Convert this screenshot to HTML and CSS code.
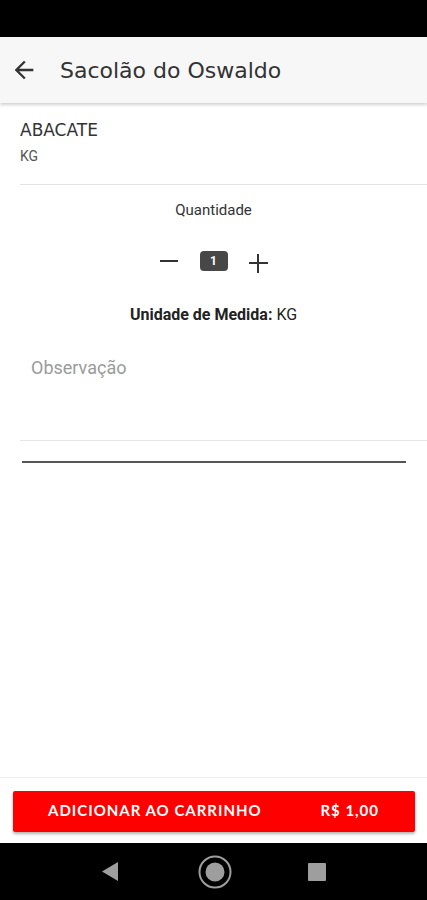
FILE: index.html
```html
<!DOCTYPE html>
<html>
<head>
  <title>Sacolão do Oswaldo</title>
  <link rel="stylesheet" href="styles.css">
</head>
<body>
  <div class="statusbar"></div>
  <header class="appbar">
    <svg class="back" width="28" height="28" viewBox="0 0 24 24">
      <path d="M20 11H7.83l5.59-5.59L12 4l-8 8 8 8 1.41-1.41L7.83 13H20v-2z" fill="#333"/>
    </svg>
    <span class="title">Sacolão do Oswaldo</span>
  </header>

  <main class="content">
    <div class="product">
      <div class="product-name">ABACATE</div>
      <div class="product-unit">KG</div>
    </div>

    <div class="qty-label">Quantidade</div>
    <div class="stepper">
      <span class="minus"></span>
      <span class="qty-box">1</span>
      <span class="plus"></span>
    </div>

    <div class="measure"><b>Unidade de Medida:</b> KG</div>

    <div class="obs">Observação</div>
    <div class="dark-line"></div>
  </main>

  <footer class="footer">
    <button class="add-btn">
      <span>ADICIONAR AO CARRINHO</span>
      <span>R$ 1,00</span>
    </button>
  </footer>

  <nav class="navbar">
    <svg class="nav-back" width="20" height="22" viewBox="0 0 20 22"><polygon points="18,1 18,20 2,10.5" fill="#9e9e9e"/></svg>
    <svg class="nav-home" width="36" height="36" viewBox="0 0 36 36">
      <circle cx="18" cy="18" r="15.5" fill="none" stroke="#9e9e9e" stroke-width="2"/>
      <circle cx="18" cy="18" r="9.5" fill="#9e9e9e"/>
    </svg>
    <svg class="nav-recent" width="20" height="20" viewBox="0 0 20 20"><rect x="1" y="1" width="18" height="18" rx="1" fill="#9e9e9e"/></svg>
  </nav>
</body>
</html>
```

FILE: styles.css
```css
/* page frame */
html, body {
  margin: 0;
  padding: 0;
}

body {
  width: 427px;
  height: 900px;
  display: flex;
  flex-direction: column;
  background-color: #fff;
  font-family: Roboto, "Liberation Sans", sans-serif;
  color: #222;
}

.statusbar {
  height: 37px;
  background-color: #000;
}

.appbar {
  height: 66px;
  display: flex;
  align-items: center;
  background-color: #f7f7f7;
  box-shadow: 0 2px 3px rgba(0, 0, 0, 0.18);
  position: relative;
  z-index: 1;
}

.back {
  margin-left: 10px;
  margin-right: 22px;
}

.title {
  font-family: "DejaVu Sans", sans-serif;
  font-size: 22px;
  color: #333;
}

/* content */
.content {
  flex: 1;
}

.product {
  margin-left: 20px;
  padding: 17px 0 20px;
  border-bottom: 1px solid #e3e3e3;
}

.product-name {
  font-family: "DejaVu Sans", sans-serif;
  font-size: 17px;
  line-height: 20px;
  color: #333;
}

.product-unit {
  margin-top: 8px;
  font-size: 14px;
  line-height: 16px;
  color: #555;
}

.qty-label {
  margin-top: 16px;
  text-align: center;
  font-size: 15px;
  line-height: 18px;
  color: #333;
}

.stepper {
  margin-top: 30px;
  height: 24px;
  display: flex;
  justify-content: center;
  align-items: center;
}

.minus {
  width: 18px;
  height: 2px;
  background-color: #333;
}

.qty-box {
  width: 28px;
  height: 20px;
  margin: 0 21px 0 22px;
  border-radius: 4px;
  background-color: #474747;
  color: #fff;
  font-size: 12px;
  font-weight: bold;
  line-height: 20px;
  text-align: center;
}

.plus {
  width: 19px;
  height: 19px;
  position: relative;
  margin-top: 4px;
}

.plus::before, .plus::after {
  content: "";
  position: absolute;
  background-color: #333;
}

.plus::before {
  left: 0;
  top: 8px;
  width: 19px;
  height: 2px;
}

.plus::after {
  left: 8px;
  top: 0;
  width: 2px;
  height: 19px;
}

.measure {
  margin-top: 33px;
  text-align: center;
  font-size: 16px;
  line-height: 18px;
  color: #222;
}

.measure b {
  font-weight: bold;
}

.obs {
  margin: 22px 0 0 20px;
  height: 95px;
  box-sizing: border-box;
  padding: 11px 11px 0;
  font-size: 18px;
  line-height: 22px;
  color: #9a9a9a;
  border-bottom: 1px solid #e6e6e6;
}

.dark-line {
  margin: 20px 0 0 22px;
  width: 384px;
  height: 2px;
  background-color: #555;
}

/* footer */
.footer {
  height: 66px;
  box-sizing: border-box;
  border-top: 1px solid #ececec;
  padding: 13px 12px 0 13px;
}

.add-btn {
  width: 100%;
  height: 41px;
  display: flex;
  justify-content: space-between;
  align-items: center;
  padding: 0 36px 3px 35px;
  border: none;
  border-radius: 2px;
  background-color: #ff0000;
  color: #fff;
  font-family: Lato, "Open Sans", sans-serif;
  font-size: 15px;
  font-weight: bold;
  letter-spacing: 1px;
  box-shadow: 0 2px 3px rgba(0, 0, 0, 0.3);
  cursor: pointer;
}

.navbar {
  height: 57px;
  background-color: #000;
  display: flex;
  align-items: center;
  justify-content: center;
}

.nav-home {
  margin: 0 74px 0 77px;
}
```
